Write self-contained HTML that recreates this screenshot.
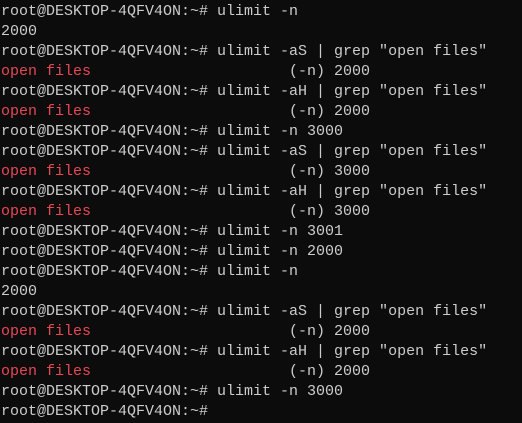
<!DOCTYPE html>
<html><head><style>
html,body{margin:0;padding:0;background:#0c0c0c;width:522px;height:423px;overflow:hidden}
pre{margin:0;padding:2px 0 0 1px;font-family:"Liberation Mono",monospace;font-size:15px;line-height:20px;color:#cccccc;letter-spacing:0}
.r{color:#e74856}
</style></head><body><pre>root@DESKTOP-4QFV4ON:~# ulimit -n
2000
root@DESKTOP-4QFV4ON:~# ulimit -aS | grep "open files"
<span class="r">open files</span>                      (-n) 2000
root@DESKTOP-4QFV4ON:~# ulimit -aH | grep "open files"
<span class="r">open files</span>                      (-n) 2000
root@DESKTOP-4QFV4ON:~# ulimit -n 3000
root@DESKTOP-4QFV4ON:~# ulimit -aS | grep "open files"
<span class="r">open files</span>                      (-n) 3000
root@DESKTOP-4QFV4ON:~# ulimit -aH | grep "open files"
<span class="r">open files</span>                      (-n) 3000
root@DESKTOP-4QFV4ON:~# ulimit -n 3001
root@DESKTOP-4QFV4ON:~# ulimit -n 2000
root@DESKTOP-4QFV4ON:~# ulimit -n
2000
root@DESKTOP-4QFV4ON:~# ulimit -aS | grep "open files"
<span class="r">open files</span>                      (-n) 2000
root@DESKTOP-4QFV4ON:~# ulimit -aH | grep "open files"
<span class="r">open files</span>                      (-n) 2000
root@DESKTOP-4QFV4ON:~# ulimit -n 3000
root@DESKTOP-4QFV4ON:~#</pre></body></html>
